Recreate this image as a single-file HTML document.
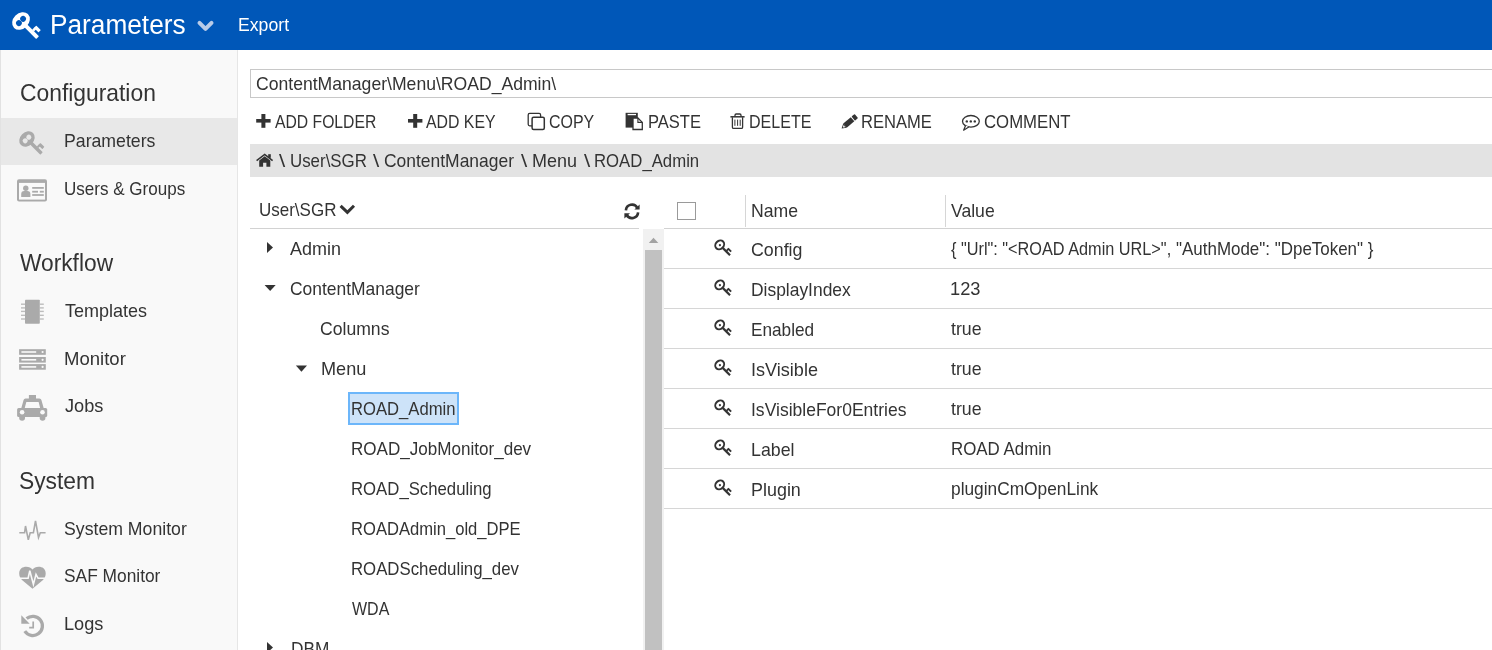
<!DOCTYPE html>
<html><head><meta charset="utf-8">
<style>
html,body{margin:0;padding:0;}
body{width:1492px;height:650px;overflow:hidden;position:relative;background:#fff;font-family:"Liberation Sans",sans-serif;}
.a{position:absolute;}
.t{position:absolute;white-space:nowrap;transform-origin:0 0;font-family:"Liberation Sans",sans-serif;}
svg{position:absolute;left:0;top:0;}
</style></head><body>
<!-- header -->
<div class="a" style="left:0;top:0;width:1492px;height:50px;background:#0057b8"></div>
<!-- sidebar -->
<div class="a" style="left:0;top:50px;width:237px;height:600px;background:#f9f9f9"></div>
<div class="a" style="left:0;top:50px;width:1px;height:600px;background:#e2e2e2"></div>
<div class="a" style="left:237px;top:50px;width:1px;height:600px;background:#e6e6e6"></div>
<div class="a" style="left:1px;top:118px;width:236px;height:47px;background:#e8e8e8"></div>
<!-- input -->
<div class="a" style="left:250px;top:69px;width:1300px;height:27px;border:1px solid #c8c8c8;background:#fff"></div>
<!-- breadcrumb -->
<div class="a" style="left:250px;top:144px;width:1242px;height:33px;background:#e3e3e3"></div>
<!-- tree header line -->
<div class="a" style="left:250px;top:228px;width:389px;height:1px;background:#d2d2d2"></div>
<!-- table lines -->
<div class="a" style="left:664px;top:228px;width:828px;height:1px;background:#d2d2d2"></div>
<div class="a" style="left:664px;top:268px;width:828px;height:1px;background:#d6d6d6"></div>
<div class="a" style="left:664px;top:308px;width:828px;height:1px;background:#d6d6d6"></div>
<div class="a" style="left:664px;top:348px;width:828px;height:1px;background:#d6d6d6"></div>
<div class="a" style="left:664px;top:388px;width:828px;height:1px;background:#d6d6d6"></div>
<div class="a" style="left:664px;top:428px;width:828px;height:1px;background:#d6d6d6"></div>
<div class="a" style="left:664px;top:468px;width:828px;height:1px;background:#d6d6d6"></div>
<div class="a" style="left:664px;top:508px;width:828px;height:1px;background:#d6d6d6"></div>
<div class="a" style="left:745px;top:195px;width:1px;height:32px;background:#d6d6d6"></div>
<div class="a" style="left:945px;top:195px;width:1px;height:32px;background:#d6d6d6"></div>
<!-- checkbox -->
<div class="a" style="left:677px;top:202px;width:17px;height:16px;border:1px solid #9a9a9a;background:#fff"></div>
<!-- scrollbar -->
<div class="a" style="left:643px;top:229px;width:21px;height:421px;background:#f1f1f1"></div>
<div class="a" style="left:645px;top:250px;width:17px;height:400px;background:#c1c1c1"></div>
<!-- selected tree node -->
<div class="a" style="left:348px;top:392px;width:107px;height:29px;border:2px solid #6cb6fa;background:#cde3f9"></div>
<svg width="1492" height="650" viewBox="0 0 1492 650">
<defs>
 <mask id="kh" maskUnits="userSpaceOnUse" x="-20" y="-20" width="40" height="40">
  <rect x="-20" y="-20" width="40" height="40" fill="#fff"/>
  <circle cx="0" cy="-2.95" r="2.9" fill="#000"/>
  <circle cx="0" cy="2.95" r="2.9" fill="#000"/>
 </mask>
 <g id="key">
  <ellipse cx="0" cy="0" rx="7.8" ry="9.8" mask="url(#kh)"/>
  <rect x="5" y="-2" width="18.5" height="4" rx="0.8"/>
  <rect x="14" y="-7.6" width="6.5" height="3.4" rx="0.6"/>
  <rect x="14" y="-5" width="2.5" height="3.2"/>
 </g>
 <g id="key2">
  <ellipse cx="0" cy="0" rx="4.0" ry="4.8" fill="none" stroke="#333" stroke-width="2"/>
  <circle cx="0.3" cy="0" r="1.1"/>
  <rect x="4.6" y="-1.1" width="10" height="2.2"/>
  <rect x="8.2" y="-4.3" width="4.6" height="1.9"/>
  <rect x="8.2" y="-3" width="1.6" height="2.4"/>
 </g>
</defs>
<!-- header key -->
<g fill="#fff" transform="translate(21,21) rotate(45)"><use href="#key"/></g>
<!-- header chevron -->
<polyline points="199.5,22.8 205.5,28.8 211.5,22.8" fill="none" stroke="#b8cbe8" stroke-width="4" stroke-linecap="round" stroke-linejoin="round"/>
<!-- sidebar icons -->
<g fill="#aaa">
 <g transform="translate(27,139) rotate(45) scale(0.876)"><use href="#key"/></g>
 <!-- id card -->
 <rect x="17" y="179.2" width="30" height="22.4" rx="2"/>
 <rect x="19" y="182.9" width="26" height="16.7" fill="#f9f9f9"/>
 <circle cx="25.8" cy="188.2" r="2.7"/>
 <path d="M21.2,197 V194 Q21.2,191 24.2,191 H27.4 Q30.4,191 30.4,194 V197 Z"/>
 <rect x="32.2" y="187" width="11.6" height="1.8"/>
 <rect x="32.2" y="190.8" width="5.8" height="1.8"/>
 <rect x="39.8" y="190.8" width="4" height="1.8"/>
 <rect x="32.2" y="194.1" width="11.6" height="1.8"/>
 <!-- chip -->
 <rect x="25" y="299.8" width="14.8" height="24" rx="0.8"/>
 <g opacity="0.75">
 <rect x="21" y="303.5" width="4" height="1.4"/><rect x="21" y="307.2" width="4" height="1.4"/><rect x="21" y="310.7" width="4" height="1.4"/><rect x="21" y="314.6" width="4" height="1.4"/><rect x="21" y="318.3" width="4" height="1.4"/>
 <rect x="39.8" y="303.5" width="4" height="1.4"/><rect x="39.8" y="307.2" width="4" height="1.4"/><rect x="39.8" y="310.7" width="4" height="1.4"/><rect x="39.8" y="314.6" width="4" height="1.4"/><rect x="39.8" y="318.3" width="4" height="1.4"/>
 </g>
 <!-- server -->
 <rect x="19.1" y="349.2" width="26.7" height="5.6"/>
 <rect x="19.1" y="357" width="26.7" height="5.6"/>
 <rect x="19.1" y="364.1" width="26.7" height="5.6"/>
 <g fill="#f9f9f9">
  <rect x="21.4" y="351.2" width="14.8" height="1.6"/><circle cx="42.6" cy="352" r="1.1"/>
  <rect x="21.4" y="359" width="14.8" height="1.6"/><circle cx="42.6" cy="359.8" r="1.1"/>
  <rect x="21.4" y="366.1" width="14.8" height="1.6"/><circle cx="42.6" cy="366.9" r="1.1"/>
 </g>
 <!-- taxi -->
 <rect x="28.9" y="395" width="7.1" height="4"/>
 <path d="M25.5,398.4 H39.4 Q41,398.4 41.4,400 L43.8,408.6 H21.2 L23.6,400 Q24,398.4 25.5,398.4 Z"/>
 <path d="M26.3,402 H38.6 L40.2,408.2 H24.7 Z" fill="#f9f9f9"/>
 <rect x="17.1" y="408" width="30.1" height="9" rx="1.5"/>
 <circle cx="22.1" cy="412.2" r="2.3" fill="#f9f9f9"/>
 <circle cx="42.5" cy="412.2" r="2.3" fill="#f9f9f9"/>
 <path d="M19.2,416 H25 V418 Q25,420.8 22.1,420.8 Q19.2,420.8 19.2,418 Z"/>
 <path d="M39.7,416 H45.4 V418 Q45.4,420.8 42.55,420.8 Q39.7,420.8 39.7,418 Z"/>
 <!-- heart -->
 <path d="M32.5,569.5 C30,565.5 19.2,565 19.2,573.5 C19.2,576.5 20.5,578.5 22,580 L32.5,588.8 L43,580 C44.5,578.5 45.7,576.5 45.7,573.5 C45.7,565 35,565.5 32.5,569.5 Z"/>
 <polyline points="19,578.3 28.1,578.3 29.8,570.8 33.4,584.4 36,574.4 38.1,578.3 46,578.3" fill="none" stroke="#f9f9f9" stroke-width="1.6" stroke-linejoin="miter"/>
 <!-- history -->
 <path d="M24.8,631.2 A9.6,9.6 0 1 0 26.6,618.6" fill="none" stroke="#aaa" stroke-width="3.3"/>
 <polygon points="21.3,615.3 21.3,623.7 29.7,623.7"/>
 <polyline points="33.2,621.4 33.2,627.6 29.2,627.6" fill="none" stroke="#aaa" stroke-width="1.7"/>
</g>
<!-- pulse -->
<polyline points="19.3,532.7 24.6,532.7 25.5,526 28.3,539.8 30.2,532.7 33.4,532.7 35.5,520.9 38.5,537.5 40.3,532.7 45.6,532.7" fill="none" stroke="#aaa" stroke-width="1.6" stroke-linejoin="miter"/>
<!-- toolbar icons -->
<g fill="#333">
 <rect x="256.2" y="119" width="14.4" height="3.6"/><rect x="261.4" y="114" width="4" height="13.8"/>
 <rect x="408" y="119" width="14.4" height="3.6"/><rect x="413.2" y="114" width="4" height="13.8"/>
 <!-- copy -->
 <rect x="528.2" y="113.4" width="12.4" height="12.4" rx="1.5" fill="none" stroke="#333" stroke-width="1.3"/>
 <rect x="532.1" y="117.3" width="12.2" height="12.2" rx="1.5" fill="#fff" stroke="#333" stroke-width="1.5"/>
 <!-- paste -->
 <rect x="625.6" y="112.8" width="12.2" height="14.8"/>
 <rect x="627.6" y="113.9" width="8.4" height="1.3" fill="#fff"/>
 <path d="M633,118 H637.9 L642.3,122.4 V129.5 H633 Z" fill="#fff" stroke="#333" stroke-width="1.3"/>
 <path d="M637.9,118 V122.4 H642.3" fill="none" stroke="#333" stroke-width="1.1"/>
 <!-- trash -->
 <g fill="none" stroke="#333" stroke-width="1.3">
  <line x1="730.4" y1="116.8" x2="744.6" y2="116.8" stroke-width="1.5"/>
  <path d="M735,116.6 V115.2 Q735,114 736.2,114 H739.8 Q741,114 741,115.2 V116.6"/>
  <path d="M732.4,117.2 V127.2 Q732.4,128.4 733.6,128.4 H741.4 Q742.6,128.4 742.6,127.2 V117.2"/>
  <line x1="734.9" y1="119.6" x2="734.9" y2="125.8" stroke-width="1"/>
  <line x1="737.6" y1="119.6" x2="737.6" y2="125.8" stroke-width="1"/>
  <line x1="740.2" y1="119.6" x2="740.2" y2="125.8" stroke-width="1"/>
 </g>
 <!-- pencil -->
 <g transform="translate(841.6,128.4) rotate(-40)">
  <polygon points="0,0 4.4,-2.7 4.4,2.7"/>
  <polygon points="1.6,0.1 3.6,-1.3 3.6,1.5" fill="#fff"/>
  <rect x="4.4" y="-2.7" width="9.9" height="5.4"/>
  <rect x="15.2" y="-2.7" width="4" height="5.4" rx="0.7"/>
 </g>
 <!-- comment -->
 <ellipse cx="970.9" cy="121.3" rx="8.4" ry="5.8" fill="none" stroke="#333" stroke-width="1.3"/>
 <path d="M965.6,125.6 L963.6,130.2 L968.8,127.1" fill="#fff" stroke="#333" stroke-width="1.2" stroke-linejoin="round"/>
 <circle cx="966.8" cy="121.4" r="1.2"/><circle cx="970.8" cy="121.4" r="1.2"/><circle cx="974.8" cy="121.4" r="1.2"/>
 <!-- home -->
 <polyline points="256.6,160.6 264.7,154.4 272.6,160.6" fill="none" stroke="#333" stroke-width="1.6"/>
 <rect x="268.2" y="154.2" width="2.6" height="3.6"/>
 <path d="M259.2,166.8 V160.6 L264.7,156.3 L270.3,160.6 V166.8 H266.4 V162.8 H263.1 V166.8 Z"/>
 <!-- tree header chevron -->
 <polyline points="340.6,205.8 347.4,212.4 354,205.8" fill="none" stroke="#333" stroke-width="3"/>
 <!-- refresh -->
 <path d="M625.9,210.4 A6.1,6.1 0 0 1 637.3,207.8" fill="none" stroke="#333" stroke-width="2.6"/>
 <polygon points="634.4,209.6 639.6,209.6 639.6,204.6"/>
 <path d="M638.1,212.4 A6.1,6.1 0 0 1 626.7,215" fill="none" stroke="#333" stroke-width="2.6"/>
 <polygon points="624.4,213.2 630,213.2 624.4,218.6"/>
 <!-- tree triangles -->
 <polygon points="267,242 273,247.5 267,253"/>
 <polygon points="264.6,284.9 275.7,284.9 270.15,291"/>
 <polygon points="295.9,365.6 307,365.6 301.45,371.7"/>
 <polygon points="267,642 273,647.5 267,653"/>
 <!-- table keys -->
 <g transform="translate(719.7,244.9) rotate(45)"><use href="#key2"/></g>
 <g transform="translate(719.7,284.9) rotate(45)"><use href="#key2"/></g>
 <g transform="translate(719.7,324.9) rotate(45)"><use href="#key2"/></g>
 <g transform="translate(719.7,364.9) rotate(45)"><use href="#key2"/></g>
 <g transform="translate(719.7,404.9) rotate(45)"><use href="#key2"/></g>
 <g transform="translate(719.7,444.9) rotate(45)"><use href="#key2"/></g>
 <g transform="translate(719.7,484.9) rotate(45)"><use href="#key2"/></g>
</g>
<!-- scrollbar arrow -->
<polygon points="648.8,243 653.5,237.8 658.3,243" fill="#a3a3a3"/>
</svg>
<div class="t" style="left:49.95px;top:11.54px;font-size:27px;line-height:27px;color:#fff;transform:scaleX(0.9717)">Parameters</div>
<div class="t" style="left:238.05px;top:16.22px;font-size:18.4px;line-height:18.4px;color:#fff;transform:scaleX(0.9610)">Export</div>
<div class="t" style="left:19.64px;top:81.25px;font-size:24.4px;line-height:24.4px;color:#333;transform:scaleX(0.9363)">Configuration</div>
<div class="t" style="left:63.55px;top:132.02px;font-size:18.4px;line-height:18.4px;color:#333;transform:scaleX(0.9615)">Parameters</div>
<div class="t" style="left:63.68px;top:179.82px;font-size:18.4px;line-height:18.4px;color:#333;transform:scaleX(0.9267)">Users &amp; Groups</div>
<div class="t" style="left:20.4px;top:250.85px;font-size:24.4px;line-height:24.4px;color:#333;transform:scaleX(0.9320)">Workflow</div>
<div class="t" style="left:64.8px;top:301.72px;font-size:18.4px;line-height:18.4px;color:#333;transform:scaleX(0.9790)">Templates</div>
<div class="t" style="left:63.68px;top:350.32px;font-size:18.4px;line-height:18.4px;color:#333;transform:scaleX(1.0083)">Monitor</div>
<div class="t" style="left:64.92px;top:396.82px;font-size:18.4px;line-height:18.4px;color:#333;transform:scaleX(0.9896)">Jobs</div>
<div class="t" style="left:19.46px;top:469.35px;font-size:24.4px;line-height:24.4px;color:#333;transform:scaleX(0.9351)">System</div>
<div class="t" style="left:64.4px;top:519.82px;font-size:18.4px;line-height:18.4px;color:#333;transform:scaleX(0.9613)">System Monitor</div>
<div class="t" style="left:64.41px;top:567.42px;font-size:18.4px;line-height:18.4px;color:#333;transform:scaleX(0.9430)">SAF Monitor</div>
<div class="t" style="left:63.71px;top:615.42px;font-size:18.4px;line-height:18.4px;color:#333;transform:scaleX(0.9866)">Logs</div>
<div class="t" style="left:256.11px;top:75.42px;font-size:18.4px;line-height:18.4px;color:#333;transform:scaleX(0.9566)">ContentManager\Menu\ROAD_Admin\</div>
<div class="t" style="left:275.47px;top:113.12px;font-size:18.4px;line-height:18.4px;color:#333;transform:scaleX(0.8543)">ADD FOLDER</div>
<div class="t" style="left:426.17px;top:113.12px;font-size:18.4px;line-height:18.4px;color:#333;transform:scaleX(0.8618)">ADD KEY</div>
<div class="t" style="left:549.19px;top:113.12px;font-size:18.4px;line-height:18.4px;color:#333;transform:scaleX(0.8685)">COPY</div>
<div class="t" style="left:647.54px;top:113.12px;font-size:18.4px;line-height:18.4px;color:#333;transform:scaleX(0.8988)">PASTE</div>
<div class="t" style="left:748.88px;top:113.12px;font-size:18.4px;line-height:18.4px;color:#333;transform:scaleX(0.8723)">DELETE</div>
<div class="t" style="left:860.64px;top:113.12px;font-size:18.4px;line-height:18.4px;color:#333;transform:scaleX(0.9007)">RENAME</div>
<div class="t" style="left:983.85px;top:113.12px;font-size:18.4px;line-height:18.4px;color:#333;transform:scaleX(0.9108)">COMMENT</div>
<div class="t" style="left:279.3px;top:151.82px;font-size:18.4px;line-height:18.4px;color:#333;transform:scaleX(1.2134)">\</div>
<div class="t" style="left:290.3px;top:151.82px;font-size:18.4px;line-height:18.4px;color:#333;transform:scaleX(0.9176)">User\SGR</div>
<div class="t" style="left:373.3px;top:151.82px;font-size:18.4px;line-height:18.4px;color:#333;transform:scaleX(1.2134)">\</div>
<div class="t" style="left:383.91px;top:151.82px;font-size:18.4px;line-height:18.4px;color:#333;transform:scaleX(0.9488)">ContentManager</div>
<div class="t" style="left:521.4px;top:151.82px;font-size:18.4px;line-height:18.4px;color:#333;transform:scaleX(1.2134)">\</div>
<div class="t" style="left:532.32px;top:151.82px;font-size:18.4px;line-height:18.4px;color:#333;transform:scaleX(0.9775)">Menu</div>
<div class="t" style="left:583.6px;top:151.82px;font-size:18.4px;line-height:18.4px;color:#333;transform:scaleX(1.2134)">\</div>
<div class="t" style="left:593.83px;top:151.82px;font-size:18.4px;line-height:18.4px;color:#333;transform:scaleX(0.9106)">ROAD_Admin</div>
<div class="t" style="left:258.79px;top:201.22px;font-size:18.4px;line-height:18.4px;color:#333;transform:scaleX(0.9237)">User\SGR</div>
<div class="t" style="left:750.95px;top:201.92px;font-size:18.4px;line-height:18.4px;color:#333;transform:scaleX(0.9587)">Name</div>
<div class="t" style="left:951.12px;top:201.92px;font-size:18.4px;line-height:18.4px;color:#333;transform:scaleX(0.9560)">Value</div>
<div class="t" style="left:289.86px;top:239.92px;font-size:18.4px;line-height:18.4px;color:#333;transform:scaleX(0.9765)">Admin</div>
<div class="t" style="left:289.81px;top:279.82px;font-size:18.4px;line-height:18.4px;color:#333;transform:scaleX(0.9480)">ContentManager</div>
<div class="t" style="left:319.81px;top:319.92px;font-size:18.4px;line-height:18.4px;color:#333;transform:scaleX(0.9568)">Columns</div>
<div class="t" style="left:321.41px;top:359.82px;font-size:18.4px;line-height:18.4px;color:#333;transform:scaleX(0.9845)">Menu</div>
<div class="t" style="left:351.23px;top:399.92px;font-size:18.4px;line-height:18.4px;color:#333;transform:scaleX(0.9053)">ROAD_Admin</div>
<div class="t" style="left:351.2px;top:439.92px;font-size:18.4px;line-height:18.4px;color:#333;transform:scaleX(0.9276)">ROAD_JobMonitor_dev</div>
<div class="t" style="left:351.23px;top:479.92px;font-size:18.4px;line-height:18.4px;color:#333;transform:scaleX(0.9105)">ROAD_Scheduling</div>
<div class="t" style="left:351.24px;top:519.92px;font-size:18.4px;line-height:18.4px;color:#333;transform:scaleX(0.9022)">ROADAdmin_old_DPE</div>
<div class="t" style="left:351.22px;top:559.92px;font-size:18.4px;line-height:18.4px;color:#333;transform:scaleX(0.9126)">ROADScheduling_dev</div>
<div class="t" style="left:351.73px;top:599.92px;font-size:18.4px;line-height:18.4px;color:#333;transform:scaleX(0.8694)">WDA</div>
<div class="t" style="left:290.58px;top:639.92px;font-size:18.4px;line-height:18.4px;color:#333;transform:scaleX(0.9380)">DBM</div>
<div class="t" style="left:750.9px;top:240.82px;font-size:18.4px;line-height:18.4px;color:#333;transform:scaleX(0.9679)">Config</div>
<div class="t" style="left:751.17px;top:280.82px;font-size:18.4px;line-height:18.4px;color:#333;transform:scaleX(0.9471)">DisplayIndex</div>
<div class="t" style="left:751.19px;top:320.82px;font-size:18.4px;line-height:18.4px;color:#333;transform:scaleX(0.9352)">Enabled</div>
<div class="t" style="left:750.93px;top:360.82px;font-size:18.4px;line-height:18.4px;color:#333;transform:scaleX(0.9828)">IsVisible</div>
<div class="t" style="left:750.98px;top:400.82px;font-size:18.4px;line-height:18.4px;color:#333;transform:scaleX(0.9525)">IsVisibleFor0Entries</div>
<div class="t" style="left:751.14px;top:440.82px;font-size:18.4px;line-height:18.4px;color:#333;transform:scaleX(0.9655)">Label</div>
<div class="t" style="left:751.13px;top:480.82px;font-size:18.4px;line-height:18.4px;color:#333;transform:scaleX(0.9748)">Plugin</div>
<div class="t" style="left:950.73px;top:239.82px;font-size:18.4px;line-height:18.4px;color:#333;transform:scaleX(0.8844)">{ "Url": "&lt;ROAD Admin URL&gt;",</div>
<div class="t" style="left:1175.68px;top:239.82px;font-size:18.4px;line-height:18.4px;color:#333;transform:scaleX(0.9216)">"AuthMode": "DpeToken" }</div>
<div class="t" style="left:949.61px;top:279.82px;font-size:18.4px;line-height:18.4px;color:#333;transform:scaleX(0.9939)">123</div>
<div class="t" style="left:951.13px;top:319.82px;font-size:18.4px;line-height:18.4px;color:#333;transform:scaleX(0.9643)">true</div>
<div class="t" style="left:951.13px;top:359.82px;font-size:18.4px;line-height:18.4px;color:#333;transform:scaleX(0.9643)">true</div>
<div class="t" style="left:951.13px;top:399.82px;font-size:18.4px;line-height:18.4px;color:#333;transform:scaleX(0.9643)">true</div>
<div class="t" style="left:950.81px;top:439.82px;font-size:18.4px;line-height:18.4px;color:#333;transform:scaleX(0.9176)">ROAD Admin</div>
<div class="t" style="left:951.08px;top:479.82px;font-size:18.4px;line-height:18.4px;color:#333;transform:scaleX(0.9411)">pluginCmOpenLink</div>
</body></html>
